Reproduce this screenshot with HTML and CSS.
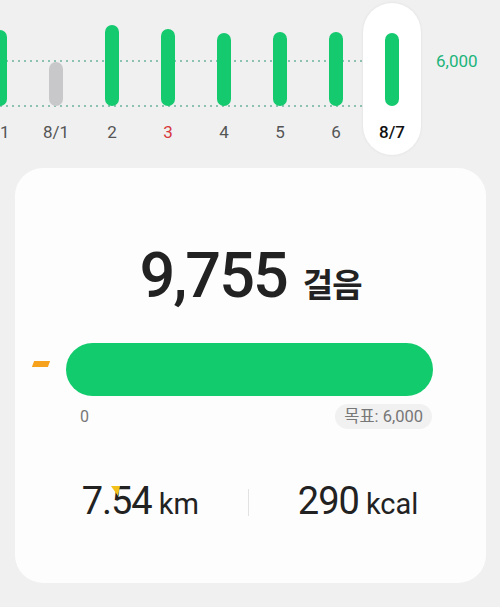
FILE: index.html
```html
<!DOCTYPE html>
<html lang="ko">
<head>
    <meta charset="UTF-8">
    <meta name="viewport" content="width=device-width, initial-scale=1.0">
    <title>걸음 수</title>
    <link rel="stylesheet" href="styles.css">
</head>
<body>
    <div class="chart">
        <div class="guide guide-goal"></div>
        <div class="guide guide-base"></div>

        <div class="days">
            <div class="day">
                <div class="bar-slot"><div class="bar" style="height: 76px"></div></div>
                <span class="label">31</span>
            </div>
            <div class="day">
                <div class="bar-slot"><div class="bar bar-low" style="height: 44px"></div></div>
                <span class="label">8/1</span>
            </div>
            <div class="day">
                <div class="bar-slot"><div class="bar" style="height: 81px"></div></div>
                <span class="label">2</span>
            </div>
            <div class="day">
                <div class="bar-slot"><div class="bar" style="height: 77px"></div></div>
                <span class="label label-sunday">3</span>
            </div>
            <div class="day">
                <div class="bar-slot"><div class="bar" style="height: 73px"></div></div>
                <span class="label">4</span>
            </div>
            <div class="day">
                <div class="bar-slot"><div class="bar" style="height: 74px"></div></div>
                <span class="label">5</span>
            </div>
            <div class="day">
                <div class="bar-slot"><div class="bar" style="height: 74px"></div></div>
                <span class="label">6</span>
            </div>
            <div class="day day-today">
                <div class="bar-slot"><div class="bar" style="height: 73px"></div></div>
                <span class="label">8/7</span>
            </div>
        </div>

        <span class="goal-label">6,000</span>
    </div>

    <div class="card">
        <span class="mark-orange"></span>

        <div class="steps">
            <span class="steps-count">9,755</span>
            <span class="steps-unit">걸음</span>
        </div>

        <div class="progress">
            <div class="progress-fill"></div>
        </div>

        <div class="progress-scale">
            <span class="scale-zero">0</span>
            <span class="goal-chip">목표: 6,000</span>
        </div>

        <div class="stats">
            <div class="stat">
                <span class="stat-value">7.54</span>
                <span class="stat-unit">km</span>
                <span class="mark-yellow"></span>
            </div>
            <div class="stat-divider"></div>
            <div class="stat">
                <span class="stat-value">290</span>
                <span class="stat-unit">kcal</span>
            </div>
        </div>
    </div>
</body>
</html>
```

FILE: styles.css
```css
body {
    margin: 0;
    background-color: #f0f0f1;
    font-family: Roboto, "Noto Sans CJK KR", sans-serif;
    color: #222;
    overflow: hidden;
}
.chart {
    position: relative;
    display: flex;
    height: 168px;
}
.guide {
    position: absolute;
    left: 0;
    width: 362px;
    height: 2px;
    background-image: repeating-linear-gradient(to right, #8dc2b2 0 2px, transparent 2px 6px);
}
.guide-goal {
    top: 60px;
}
.guide-base {
    top: 105px;
}
.days {
    position: relative;
    display: flex;
    margin-left: -28px;
}
.day {
    width: 56px;
    height: 152px;
    margin-top: 3px;
    display: flex;
    flex-direction: column;
    align-items: center;
}
.day-today {
    width: 58px;
    margin-left: -1px;
    margin-right: -1px;
    background-color: #fff;
    border-radius: 29px;
    box-shadow: 0 0 3px rgba(0,0,0,0.08);
}
.bar-slot {
    height: 103px;
    display: flex;
    align-items: flex-end;
}
.bar {
    width: 14px;
    border-radius: 7px;
    background-color: #14c96e;
}
.bar-low {
    background-color: #c8c8ca;
}
.label {
    margin-top: 16px;
    font-size: 17px;
    line-height: 20px;
    color: #555;
}
.label-sunday {
    color: #d7383b;
}
.day-today .label {
    color: #111;
    font-weight: 500;
}
.goal-label {
    margin-left: 16px;
    margin-top: 51px;
    font-size: 17px;
    line-height: 20px;
    color: #20b47a;
    align-self: flex-start;
}
.card {
    position: relative;
    margin: 0 14px 0 15px;
    height: 415px;
    padding-top: 72px;
    box-sizing: border-box;
    background-color: #fdfdfd;
    border-radius: 28px;
}
.mark-orange {
    position: absolute;
    left: 18px;
    top: 193px;
    width: 16px;
    height: 6px;
    background-color: #f6a21c;
    transform: skewX(-20deg);
}
.steps {
    display: flex;
    justify-content: center;
    align-items: baseline;
    gap: 16px;
    line-height: 72px;
}
.steps-count {
    font-size: 63px;
    font-weight: 500;
    letter-spacing: -2px;
}
.steps-unit {
    font-size: 33px;
    font-weight: 700;
    letter-spacing: -1px;
}
.progress {
    margin: 21px 53px 0 51px;
    height: 53px;
    border-radius: 27px;
    background-color: #ececec;
    overflow: hidden;
}
.progress-fill {
    height: 100%;
    width: 100%;
    background-color: #12cb6d;
}
.progress-scale {
    display: flex;
    justify-content: space-between;
    align-items: center;
    margin: 8px 54px 0 65px;
}
.scale-zero {
    font-size: 16px;
    color: #777;
}
.goal-chip {
    padding: 0 9px;
    height: 25px;
    line-height: 25px;
    border-radius: 13px;
    background-color: #f1f1f2;
    font-size: 16.5px;
    color: #777;
}
.stats {
    display: flex;
    justify-content: center;
    align-items: center;
    gap: 49px;
    margin-top: 50px;
    margin-right: 1px;
}
.stat {
    position: relative;
    display: flex;
    align-items: baseline;
    gap: 7px;
    line-height: 44px;
}
.stat-value {
    font-size: 38px;
    letter-spacing: -1px;
}
.stat-unit {
    font-size: 29px;
}
.mark-yellow {
    position: absolute;
    left: 29px;
    top: 7px;
    width: 0;
    height: 0;
    border-left: 7px solid transparent;
    border-right: 2px solid transparent;
    border-top: 10px solid #f3c11a;
}
.stat-divider {
    width: 1px;
    height: 27px;
    background-color: #e2e2e2;
}
```
